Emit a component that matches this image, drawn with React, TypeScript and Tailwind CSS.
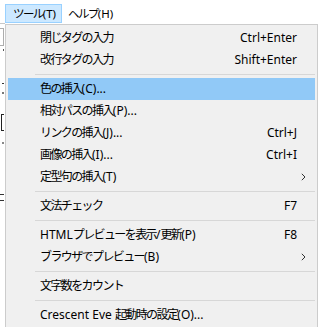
import { Fragment } from "react";

type Row =
	| { kind: "item"; label: string; shortcut?: string; sub?: boolean; active?: boolean }
	| { kind: "sep" };

const rows: Row[] = [
	{ kind: "item", label: "閉じタグの入力", shortcut: "Ctrl+Enter" },
	{ kind: "item", label: "改行タグの入力", shortcut: "Shift+Enter" },
	{ kind: "sep" },
	{ kind: "item", label: "色の挿入(C)...", active: true },
	{ kind: "item", label: "相対パスの挿入(P)..." },
	{ kind: "item", label: "リンクの挿入(J)...", shortcut: "Ctrl+J" },
	{ kind: "item", label: "画像の挿入(I)...", shortcut: "Ctrl+I" },
	{ kind: "item", label: "定型句の挿入(T)", sub: true },
	{ kind: "sep" },
	{ kind: "item", label: "文法チェック", shortcut: "F7" },
	{ kind: "sep" },
	{ kind: "item", label: "HTMLプレビューを表示/更新(P)", shortcut: "F8" },
	{ kind: "item", label: "ブラウザでプレビュー(B)", sub: true },
	{ kind: "sep" },
	{ kind: "item", label: "文字数をカウント" },
	{ kind: "sep" },
	{ kind: "item", label: "Crescent Eve 起動時の設定(O)..." },
];

// Japanese glyphs in the UI font are narrower than Noto's, so tighten only those runs
function Label({ text }: { text: string }) {
	const parts = text.split(/([\u3000-\u30ff\u4e00-\u9fff\uff00-\uffef]+)/);
	return (
		<>
			{parts.map((p, i) =>
				i % 2 === 1 ? (
					<span key={i} className="tracking-[-1.6px]">
						{p}
					</span>
				) : (
					<span key={i}>{p}</span>
				),
			)}
		</>
	);
}

function Chevron() {
	return (
		<svg width="5" height="8" viewBox="0 0 5 8" fill="none">
			<path d="M0.8 0.8 L4 4 L0.8 7.2" stroke="#333" strokeWidth="1" />
		</svg>
	);
}

export default function App() {
	return (
		<div
			className="w-[319px] h-[327px] overflow-hidden bg-white text-black text-[12px] leading-none"
			style={{ fontFamily: '"Noto Sans", "Noto Sans CJK JP", sans-serif' }}
		>
			{/* Menu bar */}
			<div className="h-[23px] flex items-start pt-[4px] pl-[5px] text-[11.5px]">
				<div className="h-[19px] flex items-center pl-[7px] pr-[5px] bg-[#cce8ff] border border-[#99d1ff]">
					<Label text="ツール(T)" />
				</div>
				<div className="h-[19px] flex items-center pl-[6px] pr-[6px]">
					<Label text="ヘルプ(H)" />
				</div>
			</div>

			<div className="flex">
				{/* Editor behind the menu */}
				<div className="w-[5px] border-t border-[#c8c8c8] flex flex-col items-start">
					<div className="mt-[4px] w-[4px] h-[18px] border border-l-0 border-[#adadad] bg-white" />
					<div className="mt-[3px] ml-[3px] w-px h-[2px] bg-[#555]" />
					<div className="mt-[32px] ml-[2px] w-[2px] h-px bg-[#333]" />
					<div className="mt-[8px] ml-[2px] w-[2px] h-[2px] bg-[#777]" />
					<div className="mt-[20px] ml-[1px] w-[3px] h-[17px] border border-r-0 border-[#222]" />
					<div className="mt-[11px] ml-[2px] w-[2px] h-[2px] bg-[#888]" />
					<div className="mt-[50px] ml-0 w-[4px] h-px bg-[#333]" />
					<div className="mt-[5px] ml-0 w-[4px] h-px bg-[#333]" />
				</div>

				{/* Popup menu */}
				<div className="flex-1 mt-[1px] mr-[1px] h-[400px] bg-[#f0f0f0] border border-[#cccccc] px-[2px] pt-[2px]">
					{rows.map((r, i) => (
						<Fragment key={i}>
							{r.kind === "sep" ? (
								<div className="h-[7px] flex items-center pl-[27px]">
									<div className="h-px flex-1 bg-[#d7d7d7]" />
								</div>
							) : (
								<div
									className={
										"h-[22px] flex items-center pl-[32px] " +
										(r.active ? "bg-[#91c9f7]" : "")
									}
								>
									<span className="flex-1 whitespace-nowrap">
										<Label text={r.label} />
									</span>
									{r.shortcut && <span>{r.shortcut}</span>}
									<span className="w-[18px] flex items-center pl-[4px]">
										{r.sub && <Chevron />}
									</span>
								</div>
							)}
						</Fragment>
					))}
				</div>
			</div>
		</div>
	);
}
